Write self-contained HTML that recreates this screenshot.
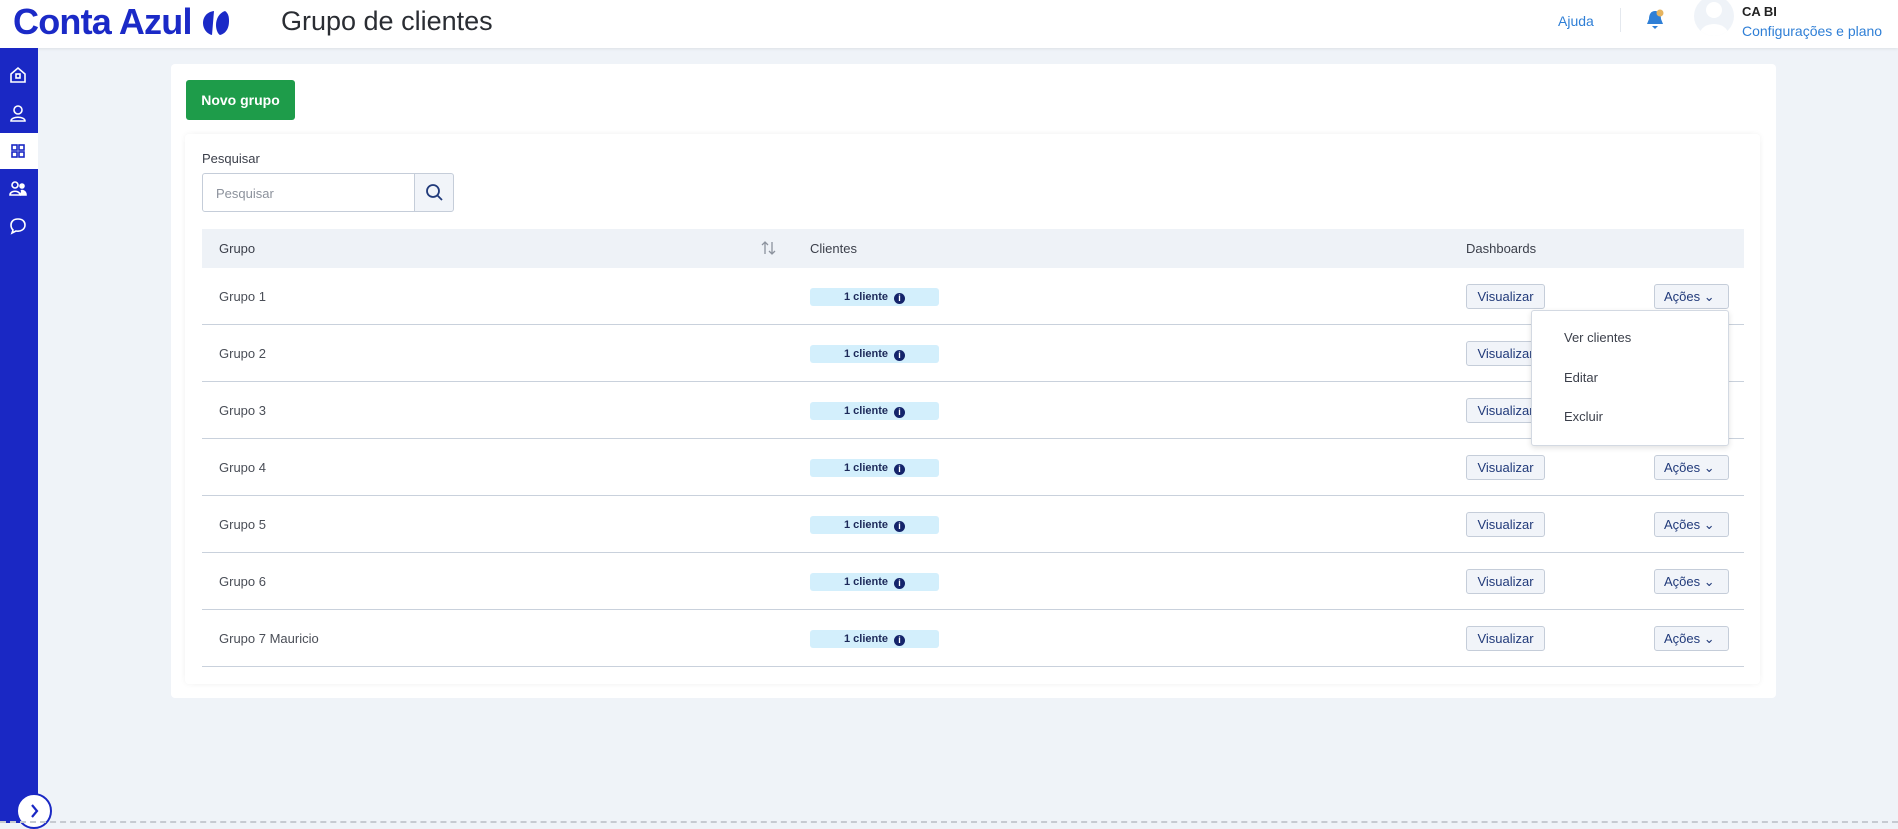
<!DOCTYPE html>
<html><head><meta charset="utf-8">
<style>
*{box-sizing:border-box;margin:0;padding:0}
body{width:1898px;height:823px;overflow:hidden;background:#eff3f8;font-family:"Liberation Sans",sans-serif;position:relative;color:#3b3f4a}
.hdr{position:absolute;left:0;top:0;width:1898px;height:48px;background:#fff;box-shadow:0 1px 3px rgba(0,0,0,.08)}
.logo{position:absolute;left:13px;top:1px;font-size:36px;font-weight:bold;color:#1b2ac7;letter-spacing:-0.8px}
.title{position:absolute;left:281px;top:6px;font-size:27px;color:#2a2d33}
.side{position:absolute;left:0;top:48px;width:38px;height:775px;background:#1a28c4}
.act{position:absolute;left:0;top:85px;width:38px;height:36px;background:#fff}
.ic{position:absolute;left:7px;width:22px;height:22px}
.card{position:absolute;left:171px;top:64px;width:1605px;height:634px;background:#fff;border-radius:4px}
.btn{position:absolute;left:186px;top:80px;width:109px;height:40px;background:#1e9c4a;color:#fff;font-weight:bold;font-size:14px;border-radius:3px;text-align:center;line-height:40px}
.inner{position:absolute;left:185px;top:134px;width:1575px;height:550px;background:#fff;box-shadow:0 0 6px rgba(0,0,0,.06);border-radius:4px}
.t{position:absolute;white-space:nowrap}
.row{position:absolute;left:202px;width:1542px;height:57px;border-bottom:1px solid #c9d1dc}
.pill{position:absolute;left:608px;top:20px;width:129px;height:18px;background:#d3effc;border-radius:3px;font-size:11px;font-weight:bold;color:#1d2a5a;text-align:center;line-height:18px}
.pill i{display:inline-block;width:11px;height:11px;border-radius:50%;background:#14246b;color:#fff;font-style:normal;font-size:9px;line-height:11px;vertical-align:-1px;margin-left:6px}
.vis{position:absolute;left:1264px;top:16px;width:79px;height:25px;background:#f1f4f9;border:1px solid #c5cdd9;border-radius:3px;font-size:13px;color:#213a7a;text-align:center;line-height:23px}
.acao{position:absolute;left:1452px;top:16px;width:75px;height:25px;background:#f1f4f9;border:1px solid #c5cdd9;border-radius:3px;font-size:13px;color:#213a7a;line-height:23px;padding-left:9px}
.rn{position:absolute;left:17px;top:21px;font-size:13px;color:#4a4e57}
</style></head><body>
<div class="hdr">
<div class="logo">Conta Azul <svg width="30" height="28" viewBox="0 0 30 28" style="vertical-align:-3px"><path d="M13 2 C5 3 2 9 2 14 C2 20 6 25 11 26 Z" fill="#1b2ac7"/><path d="M24 2 C18 4 15 10 15 16 C15 21 17 25 19 26 C26 24 28 18 28 12 C28 7 27 4 24 2Z" fill="#1b2ac7"/></svg></div>
<div class="title">Grupo de clientes</div>
<div class="t" style="left:1558px;top:13px;font-size:14px;color:#2f7fd6">Ajuda</div>
<div style="position:absolute;left:1620px;top:8px;width:1px;height:24px;background:#e4e8ee"></div>
<svg style="position:absolute;left:1644px;top:8px" width="22" height="24" viewBox="0 0 22 24"><path d="M11 3 C6 3 5 8 5 11 L3 16 L19 16 L17 11 C17 8 16 3 11 3Z" fill="#2f7fd6"/><path d="M8 18 L14 18 L11 21Z" fill="#2f7fd6"/><circle cx="16" cy="5" r="3.5" fill="#e6b45f"/></svg>
<div style="position:absolute;left:1694px;top:-4px;width:40px;height:40px;border-radius:50%;background:#eff3f8;overflow:hidden"><div style="position:absolute;left:12px;top:6px;width:16px;height:16px;border-radius:50%;background:#fff"></div><div style="position:absolute;left:6px;top:28px;width:28px;height:20px;border-radius:50%;background:#fff"></div></div>
<div class="t" style="left:1742px;top:4px;font-size:13px;font-weight:bold;color:#222">CA BI</div>
<div class="t" style="left:1742px;top:23px;font-size:14px;color:#2f7fd6">Configurações e plano</div>
</div>
<div class="side">
<div class="act"></div>
<svg class="ic" style="top:16px" viewBox="0 0 22 22" fill="none" stroke="#fff" stroke-width="1.6"><path d="M4 10 L11 4 L18 10 L18 18 L4 18Z"/><rect x="9" y="10" width="4" height="4"/></svg>
<svg class="ic" style="top:54px" viewBox="0 0 22 22" fill="none" stroke="#fff" stroke-width="1.6"><circle cx="11" cy="8" r="4"/><path d="M4 19 C4 14 18 14 18 19Z"/></svg>
<svg class="ic" style="top:92px" viewBox="0 0 22 22" fill="none" stroke="#1a28c4" stroke-width="1.6"><rect x="5" y="5" width="5" height="5"/><rect x="12" y="5" width="5" height="5"/><rect x="5" y="12" width="5" height="5"/><rect x="12" y="12" width="5" height="5"/></svg>
<svg class="ic" style="top:130px" viewBox="0 0 22 22" fill="none" stroke="#fff" stroke-width="1.6"><circle cx="8" cy="7" r="3"/><path d="M3 17 C3 12 13 12 13 17Z"/><circle cx="15" cy="8" r="2" fill="#fff"/><path d="M13 17 L19 17 C19 13 15 12 14 13" fill="#fff"/></svg>
<svg class="ic" style="top:167px" viewBox="0 0 22 22" fill="none" stroke="#fff" stroke-width="1.6"><path d="M11 4 C6 4 4 7 4 10 C4 12 5 14 6 15 L5 18 L9 16 C14 17 18 14 18 10 C18 7 16 4 11 4Z"/></svg>
</div>
<div style="position:absolute;left:16px;top:793px;width:36px;height:36px;border-radius:50%;background:#fff;border:2px solid #1a28c4"><svg width="32" height="32" viewBox="0 0 32 32" style="position:absolute;left:0;top:0"><path d="M14 10 L19 16 L14 22" fill="none" stroke="#1a28c4" stroke-width="2.2"/></svg></div>
<div style="position:absolute;left:0;top:821px;width:1898px;height:0;border-top:2px dashed #c6cad1"></div>

<div class="card"></div>
<div class="btn">Novo grupo</div>
<div class="inner"></div>
<div class="t" style="left:202px;top:151px;font-size:13px;color:#3b3f4a">Pesquisar</div>
<div style="position:absolute;left:202px;top:173px;width:213px;height:39px;border:1px solid #c5cdd9;border-radius:3px 0 0 3px;font-size:13px;color:#8c929c;padding:12px 13px">Pesquisar</div>
<div style="position:absolute;left:414px;top:173px;width:40px;height:39px;border:1px solid #c5cdd9;border-radius:0 3px 3px 0;background:#f1f4f9"><svg width="38" height="37" viewBox="0 0 38 37"><circle cx="18" cy="17" r="6" fill="none" stroke="#213a7a" stroke-width="1.8"/><path d="M22.5 21.5 L27 26" stroke="#213a7a" stroke-width="1.8"/></svg></div>
<div style="position:absolute;left:202px;top:229px;width:1542px;height:39px;background:#eef2f7"></div>
<div class="t" style="left:219px;top:241px;font-size:13px;color:#3b3f4a">Grupo</div>
<svg style="position:absolute;left:760px;top:240px" width="18" height="16" viewBox="0 0 18 16" fill="none" stroke="#8c939e" stroke-width="1.3"><path d="M5 14 L5 2 M2 5 L5 2 L8 5 M12 2 L12 14 M9 11 L12 14 L15 11"/></svg>
<div class="t" style="left:810px;top:241px;font-size:13px;color:#3b3f4a">Clientes</div>
<div class="t" style="left:1466px;top:241px;font-size:13px;color:#3b3f4a">Dashboards</div>

<div class="row" style="top:268px"><div class="rn">Grupo 1</div><div class="pill">1 cliente<i>i</i></div><div class="vis">Visualizar</div><div class="acao">Ações &#8964;</div></div>
<div class="row" style="top:325px"><div class="rn">Grupo 2</div><div class="pill">1 cliente<i>i</i></div><div class="vis">Visualizar</div></div>
<div class="row" style="top:382px"><div class="rn">Grupo 3</div><div class="pill">1 cliente<i>i</i></div><div class="vis">Visualizar</div></div>
<div class="row" style="top:439px"><div class="rn">Grupo 4</div><div class="pill">1 cliente<i>i</i></div><div class="vis">Visualizar</div><div class="acao">Ações &#8964;</div></div>
<div class="row" style="top:496px"><div class="rn">Grupo 5</div><div class="pill">1 cliente<i>i</i></div><div class="vis">Visualizar</div><div class="acao">Ações &#8964;</div></div>
<div class="row" style="top:553px"><div class="rn">Grupo 6</div><div class="pill">1 cliente<i>i</i></div><div class="vis">Visualizar</div><div class="acao">Ações &#8964;</div></div>
<div class="row" style="top:610px"><div class="rn">Grupo 7 Mauricio</div><div class="pill">1 cliente<i>i</i></div><div class="vis">Visualizar</div><div class="acao">Ações &#8964;</div></div>

<div style="position:absolute;left:1531px;top:310px;width:198px;height:136px;background:#fff;border:1px solid #d3d9e2;border-radius:3px;box-shadow:0 2px 6px rgba(0,0,0,.12)">
<div class="t" style="left:32px;top:19px;font-size:13px;color:#3b3f4a">Ver clientes</div>
<div class="t" style="left:32px;top:59px;font-size:13px;color:#3b3f4a">Editar</div>
<div class="t" style="left:32px;top:98px;font-size:13px;color:#3b3f4a">Excluir</div>
</div>
</body></html>
